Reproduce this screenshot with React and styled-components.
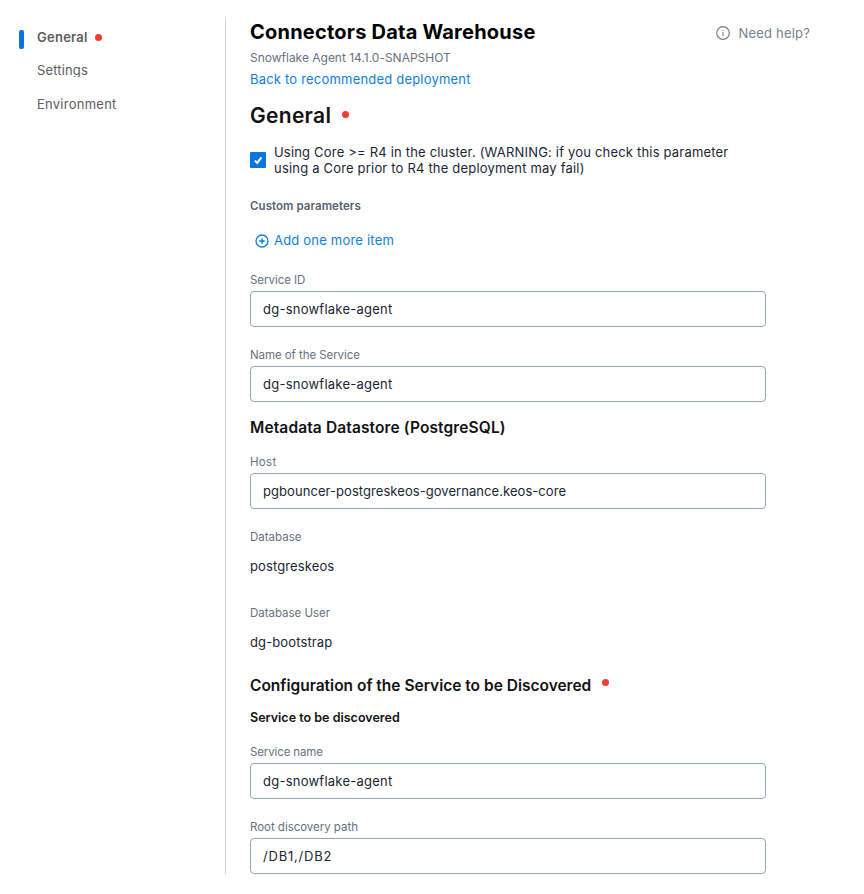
import React from 'react';
import styled, { createGlobalStyle } from 'styled-components';

const GlobalStyle = createGlobalStyle`
  *, *::before, *::after { box-sizing: border-box; }
  body {
    margin: 0;
    background: #fff;
    color: #1a2634;
    font-family: Inter, "Liberation Sans", sans-serif;
    font-size: 13px;
    line-height: 16px;
    letter-spacing: 0.18px;
  }
`;

const Page = styled.div`
  display: flex;
  width: 864px;
  height: 894px;
  padding: 18px 54px 20px 19px;
  overflow: hidden;
`;

const Sidebar = styled.nav`
  width: 207px;
  flex: none;
  padding-top: 11px;
  border-right: 1px solid #cdd3da;
`;

const NavItem = styled.a`
  display: flex;
  align-items: flex-start;
  height: ${(p) => p.$height}px;
  color: #5d5d5d;
  font-weight: ${(p) => (p.$active ? 600 : 400)};
  letter-spacing: ${(p) => p.$spacing}px;
  white-space: nowrap;
`;

const ActiveBar = styled.span`
  width: 5px;
  height: 19px;
  margin-top: 1px;
  border-radius: 2px;
  background: ${(p) => (p.$on ? '#0776df' : 'transparent')};
`;

const NavLabel = styled.span`
  height: ${(p) => (p.$clipped ? 15 : 18)}px;
  margin-left: 13px;
  overflow: hidden;
`;

const Dot = styled.span`
  flex: none;
  width: 7px;
  height: 7px;
  margin: ${(p) => p.$margin};
  border-radius: 50%;
  background: #f03e35;
`;

const Main = styled.main`
  flex: 1;
  min-width: 0;
  padding-left: 24px;
  white-space: nowrap;
`;

const Header = styled.header`
  display: flex;
  justify-content: space-between;
  align-items: flex-start;
`;

const Title = styled.h1`
  margin: 0;
  color: #000;
  font-size: 20px;
  font-weight: 700;
  line-height: 28px;
  letter-spacing: 0.22px;
`;

const Help = styled.a`
  display: flex;
  margin-top: 7px;
  color: #74818f;
  letter-spacing: 0.18px;

  svg { margin: 1px 9px 0 0; }
`;

const Version = styled.div`
  margin-top: 4px;
  color: #66727f;
  font-size: 12px;
  letter-spacing: -0.01px;
`;

const BackLink = styled.a`
  display: block;
  margin-top: 5px;
  color: #0f7ee0;
  letter-spacing: 0.2px;
`;

const SectionTitle = styled.h2`
  display: flex;
  margin: 15px 0 0;
  color: #121212;
  font-size: 21px;
  font-weight: 600;
  line-height: 28px;
  letter-spacing: 0.3px;
`;

const GroupTitle = styled.h3`
  display: flex;
  margin: ${(p) => p.$top}px 0 0;
  color: #121212;
  font-size: 15.5px;
  font-weight: 600;
  line-height: 20px;
  letter-spacing: ${(p) => p.$spacing}px;
`;

const SubTitle = styled.h4`
  margin: 14px 0 0;
  color: #121212;
  font-size: 12.5px;
  font-weight: 600;
  letter-spacing: 0.01px;
`;

const CheckRow = styled.label`
  display: flex;
  gap: 8px;
  margin-top: 14px;
`;

const CheckBox = styled.span`
  display: flex;
  width: 16px;
  height: 16px;
  margin-top: 8px;
  border-radius: 1px;
  background: #0776df;
`;

const CheckText = styled.span`
  letter-spacing: 0.188px;
`;

const ParamsTitle = styled.div`
  margin-top: 22px;
  color: #56626f;
  font-size: 11.5px;
  font-weight: 600;
  letter-spacing: 0.06px;
`;

const AddButton = styled.button`
  display: flex;
  margin: 18px 0 0;
  padding: 0 0 0 5px;
  border: 0;
  background: none;
  color: #0f7ee0;
  font: inherit;
  letter-spacing: 0.2px;

  svg { margin: 2px 5px 0 0; }
`;

const Field = styled.div`
  margin-top: ${(p) => p.$top}px;
`;

const Label = styled.div`
  color: #66727f;
  font-size: 11.5px;
  letter-spacing: ${(p) => p.$spacing}px;
`;

const Input = styled.input`
  display: block;
  width: 516px;
  height: 36px;
  margin-top: 3px;
  padding: 0 12px;
  border: 1px solid #96a4b4;
  border-radius: 4px;
  outline: 0;
  background: #fff;
  color: #1a2634;
  font: inherit;
  letter-spacing: ${(p) => p.$spacing}px;
`;

const Value = styled.div`
  margin-top: 13px;
  letter-spacing: 0.12px;
`;

const InfoIcon = () => (
  <svg width="14" height="14" viewBox="0 0 14 14" fill="none" stroke="currentColor">
    <circle cx="7" cy="7" r="6.3" strokeWidth="1.2" />
    <path d="M7 6.3V10M7 4V5.1" strokeWidth="1.2" />
  </svg>
);

const PlusIcon = () => (
  <svg width="14" height="14" viewBox="0 0 14 14" fill="none" stroke="currentColor">
    <circle cx="7" cy="7" r="6" strokeWidth="1.3" />
    <path d="M7 4.2V9.8M4.2 7H9.8" strokeWidth="1.4" />
  </svg>
);

const CheckIcon = () => (
  <svg width="16" height="16" viewBox="0 0 16 16" fill="none" stroke="#fff" strokeWidth="2">
    <path d="M4.9 8.6L7.2 10.9L11.4 5.3" />
  </svg>
);

const TextField = ({ label, value, top = 20, labelSpacing, spacing = 0.244 }) => (
  <Field $top={top}>
    <Label $spacing={labelSpacing}>{label}</Label>
    <Input aria-label={label} defaultValue={value} $spacing={spacing} />
  </Field>
);

const ReadOnlyField = ({ label, value, top, labelSpacing }) => (
  <Field $top={top}>
    <Label $spacing={labelSpacing}>{label}</Label>
    <Value>{value}</Value>
  </Field>
);

export default function App() {
  return (
    <>
      <GlobalStyle />
      <Page>
        <Sidebar>
          <NavItem $active $height={33} $spacing={0.25}>
            <ActiveBar $on />
            <NavLabel>General</NavLabel>
            <Dot $margin="5px 0 0 7px" />
          </NavItem>
          <NavItem $height={34} $spacing={0.156}>
            <ActiveBar />
            <NavLabel $clipped>Settings</NavLabel>
          </NavItem>
          <NavItem $height={34} $spacing={0.25}>
            <ActiveBar />
            <NavLabel>Environment</NavLabel>
          </NavItem>
        </Sidebar>
        <Main>
          <Header>
            <Title>Connectors Data Warehouse</Title>
            <Help><InfoIcon />Need help?</Help>
          </Header>
          <Version>Snowflake Agent 14.1.0-SNAPSHOT</Version>
          <BackLink>Back to recommended deployment</BackLink>
          <SectionTitle>General<Dot $margin="9px 0 0 11px" /></SectionTitle>
          <CheckRow>
            <CheckBox><CheckIcon /></CheckBox>
            <CheckText>
              Using Core &gt;= R4 in the cluster. (WARNING: if you check this parameter<br />
              using a Core prior to R4 the deployment may fail)
            </CheckText>
          </CheckRow>
          <ParamsTitle>Custom parameters</ParamsTitle>
          <AddButton><PlusIcon />Add one more item</AddButton>
          <TextField top={24} label="Service ID" value="dg-snowflake-agent" labelSpacing={-0.04} />
          <TextField label="Name of the Service" value="dg-snowflake-agent" labelSpacing={-0.07} />
          <GroupTitle $top={16} $spacing={0.12}>Metadata Datastore (PostgreSQL)</GroupTitle>
          <TextField
            top={16}
            label="Host"
            value="pgbouncer-postgreskeos-governance.keos-core"
            labelSpacing={0.3}
            spacing={0.06}
          />
          <ReadOnlyField top={20} label="Database" value="postgreskeos" labelSpacing={0} />
          <ReadOnlyField top={31} label="Database User" value="dg-bootstrap" labelSpacing={-0.03} />
          <GroupTitle $top={26} $spacing={0}>
            Configuration of the Service to be Discovered
            <Dot $margin="3px 0 0 11px" />
          </GroupTitle>
          <SubTitle>Service to be discovered</SubTitle>
          <TextField top={18} label="Service name" value="dg-snowflake-agent" labelSpacing={-0.13} />
          <TextField label="Root discovery path" value="/DB1,/DB2" labelSpacing={-0.03} spacing={0.8} />
        </Main>
      </Page>
    </>
  );
}
